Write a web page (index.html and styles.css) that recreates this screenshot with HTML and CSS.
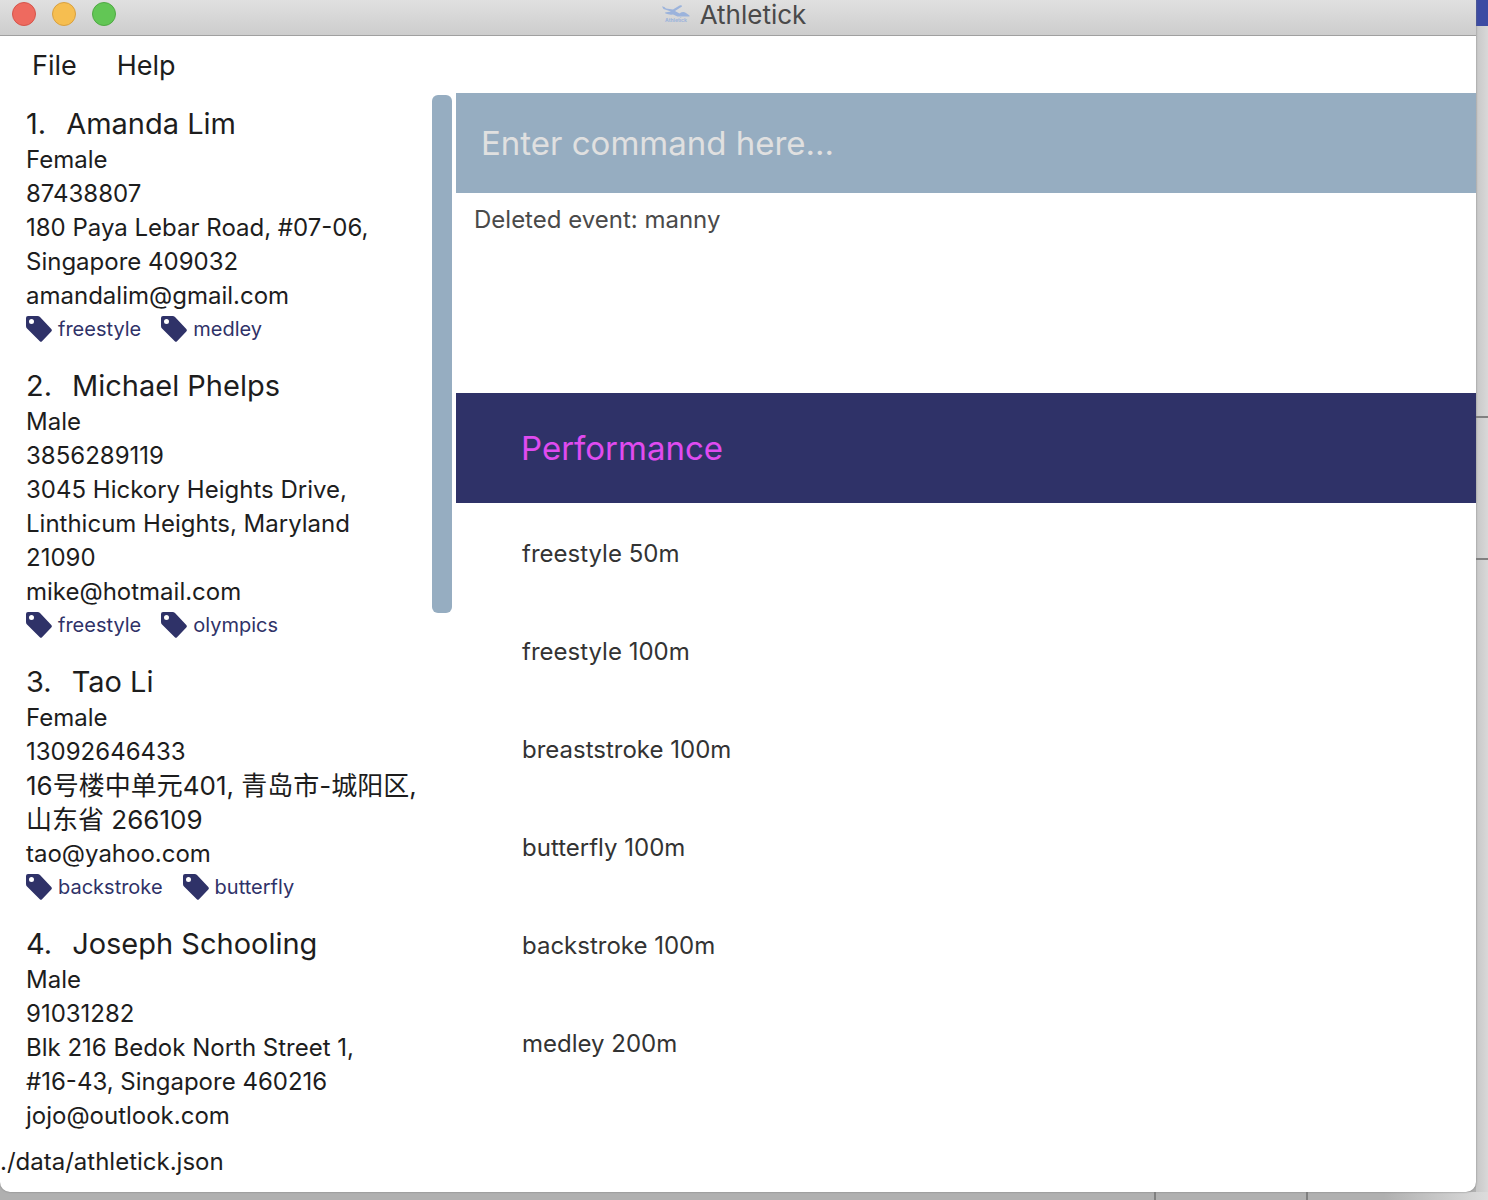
FILE: index.html
```
<!DOCTYPE html>
<html lang="en">
<head>
<meta charset="utf-8">
<title>Athletick</title>
<link rel="stylesheet" href="styles.css">
</head>
<body>
<svg class="defs" aria-hidden="true">
  <symbol id="tag" viewBox="0 0 26 26"><path fill-rule="evenodd" d="M2 0h9.500q1.500 0 2.500 1l11.300 12q1.200 1.300 0 2.500L16 25.300q-1 1-2.200 0L1 12.500Q0 11.500 0 10V2Q0 0 2 0zM5.500 3a2.500 2.500 0 1 0 0 5a2.500 2.500 0 0 0 0-5z"/></symbol>
</svg>
<div class="desktop">
  <div class="window">
    <header class="titlebar">
      <div class="lights">
        <button class="light close" aria-label="Close"></button>
        <button class="light minimize" aria-label="Minimize"></button>
        <button class="light zoom" aria-label="Zoom"></button>
      </div>
      <h1 class="title">
        <svg class="logo" viewBox="0 0 28 18" aria-hidden="true">
          <path d="M0 1.500Q2 1 4 3.500L11 4.500 17.500.5Q20-.5 20 1.500L13 6l4.500 2.500Q21 6 24 8l3.500 2.500v1H15.500L11 9.500Q7 10 3.500 8.500L3 7.500l6-1L1.500 4z"/>
          <text x="14" y="17" text-anchor="middle">Athletick</text>
        </svg>
        Athletick
      </h1>
    </header>
    <nav class="menu">
      <button class="menu-item">File</button>
      <button class="menu-item">Help</button>
    </nav>
    <main class="content">
      <section class="people" aria-label="Athletes">
        <ol class="people-list">
          <li class="person">
            <h2 class="name"><span>1.</span><span>Amanda Lim</span></h2>
            <p>Female</p>
            <p>87438807</p>
            <p>180 Paya Lebar Road, #07-06,<br>Singapore 409032</p>
            <p>amandalim@gmail.com</p>
            <div class="tags"><span class="tag"><svg><use href="#tag"/></svg>freestyle</span><span class="tag"><svg><use href="#tag"/></svg>medley</span></div>
          </li>
          <li class="person">
            <h2 class="name"><span>2.</span><span>Michael Phelps</span></h2>
            <p>Male</p>
            <p>3856289119</p>
            <p>3045 Hickory Heights Drive,<br>Linthicum Heights, Maryland<br>21090</p>
            <p>mike@hotmail.com</p>
            <div class="tags"><span class="tag"><svg><use href="#tag"/></svg>freestyle</span><span class="tag"><svg><use href="#tag"/></svg>olympics</span></div>
          </li>
          <li class="person">
            <h2 class="name"><span>3.</span><span>Tao Li</span></h2>
            <p>Female</p>
            <p>13092646433</p>
            <p lang="zh">16号楼中单元401, 青岛市-城阳区,<br>山东省 266109</p>
            <p>tao@yahoo.com</p>
            <div class="tags"><span class="tag"><svg><use href="#tag"/></svg>backstroke</span><span class="tag"><svg><use href="#tag"/></svg>butterfly</span></div>
          </li>
          <li class="person">
            <h2 class="name"><span>4.</span><span>Joseph Schooling</span></h2>
            <p>Male</p>
            <p>91031282</p>
            <p>Blk 216 Bedok North Street 1,<br>#16-43, Singapore 460216</p>
            <p>jojo@outlook.com</p>
          </li>
        </ol>
        <div class="scroll-track"><div class="scroll-thumb"></div></div>
      </section>
      <section class="detail">
        <input class="command" type="text" placeholder="Enter command here..." aria-label="Command">
        <output class="result">Deleted event: manny</output>
        <h2 class="banner">Performance</h2>
        <ul class="events">
          <li>freestyle 50m</li>
          <li>freestyle 100m</li>
          <li>breaststroke 100m</li>
          <li>butterfly 100m</li>
          <li>backstroke 100m</li>
          <li>medley 200m</li>
        </ul>
      </section>
    </main>
    <footer class="status">./data/athletick.json</footer>
  </div>
  <div class="behind-side" aria-hidden="true"><span class="behind-blue"></span><span class="behind-gap"></span><span class="behind-row"></span></div>
  <div class="behind-bottom" aria-hidden="true"><span></span></div>
</div>
</body>
</html>
```
FILE: styles.css
```
* { box-sizing: border-box; }
body, h1, h2, p, ol, ul { margin: 0; padding: 0; }
ol, ul { list-style: none; }
body {
  font-family: Inter, "Noto Sans CJK SC", sans-serif;
  font-size: 24px;
  line-height: 34px;
  color: #1d1d1d;
}
h1, h2 { font-weight: 400; }
button, input { font: inherit; color: inherit; border: 0; padding: 0; background: none; }
.defs { position: absolute; width: 0; height: 0; }

.desktop {
  display: grid;
  grid-template-columns: 1fr 12px;
  grid-template-rows: 1fr 8px;
  min-height: 100vh;
  background: #b0b0b0;
}
.window {
  display: flex;
  flex-direction: column;
  background: #fff;
  border-radius: 0 0 10px 10px;
  box-shadow: 0 0 2px #777;
  z-index: 1;
  min-width: 0;
}
.behind-side {
  display: flex;
  flex-direction: column;
  background: linear-gradient(90deg, #c8c8c8, #d8d8d8);
}
.behind-blue { height: 26px; background: #3c4ba3; }
.behind-gap { height: 390px; }
.behind-row { height: 144px; border: solid #808080; border-width: 2px 0; }
.behind-bottom {
  grid-column: 1 / -1;
  display: flex;
  justify-content: flex-end;
  padding-right: 180px;
  background: linear-gradient(90deg, #b0b0b0 93%, #dcdcdc);
}
.behind-bottom span { width: 154px; border: solid #808080; border-width: 0 2px; }

.titlebar {
  display: grid;
  grid-template-columns: 1fr auto 1fr;
  height: 36px;
  background: linear-gradient(#e0e0e0, #cdcdcd);
  border-bottom: 1px solid #a0a0a0;
}
.lights { display: flex; gap: 16px; padding: 2px 12px; }
.light { width: 24px; height: 24px; border-radius: 50%; border: 1px solid; }
.close { background: #ee6a5f; border-color: #d5554b; }
.minimize { background: #f6be50; border-color: #d8a040; }
.zoom { background: #62c655; border-color: #50a944; }
.title {
  display: flex;
  gap: 10px;
  padding: 1px 8px 0 0;
  font-size: 26px;
  line-height: 28px;
  color: #4a4a4a;
}
.logo { width: 28px; height: 18px; margin-top: 4px; fill: #9bb3dc; }
.logo text { font-size: 5px; font-weight: 700; }

.menu { display: flex; gap: 40px; height: 57px; padding: 2px 32px 0; font-size: 27px; }

.content { display: grid; grid-template-columns: 456px 1fr; flex: 1; }
.people { display: grid; grid-template-columns: 1fr 20px; padding-right: 4px; }
.people-list { display: flex; flex-direction: column; gap: 22px; padding: 12px 0 0 26px; white-space: nowrap; }
.person :lang(zh) { font-size: 26px; }
.name { display: flex; gap: 20px; font-size: 29px; line-height: 38px; }
.tags { display: flex; gap: 20px; font-size: 20px; line-height: 32px; color: #2f3268; }
.tag { display: flex; align-items: center; gap: 6px; }
.tag svg { width: 26px; height: 26px; fill: #2f3268; }
.scroll-track { padding-top: 2px; }
.scroll-thumb { height: 518px; border-radius: 6px; background: #96adc1; }

.detail { display: flex; flex-direction: column; }
.command { width: 100%; height: 100px; padding: 0 25px; background: #96adc1; font-size: 33px; border-radius: 0; }
.command::placeholder { color: #e0e0e0; opacity: 1; }
.result { height: 200px; padding: 10px 18px; color: #4a4a4a; }
.banner { padding: 0 65px; background: #2f3268; color: #e04bf0; font-size: 33px; line-height: 110px; }
.events { padding: 2px 66px; line-height: 98px; color: #333; }

.status { height: 47px; line-height: 34px; }
```
